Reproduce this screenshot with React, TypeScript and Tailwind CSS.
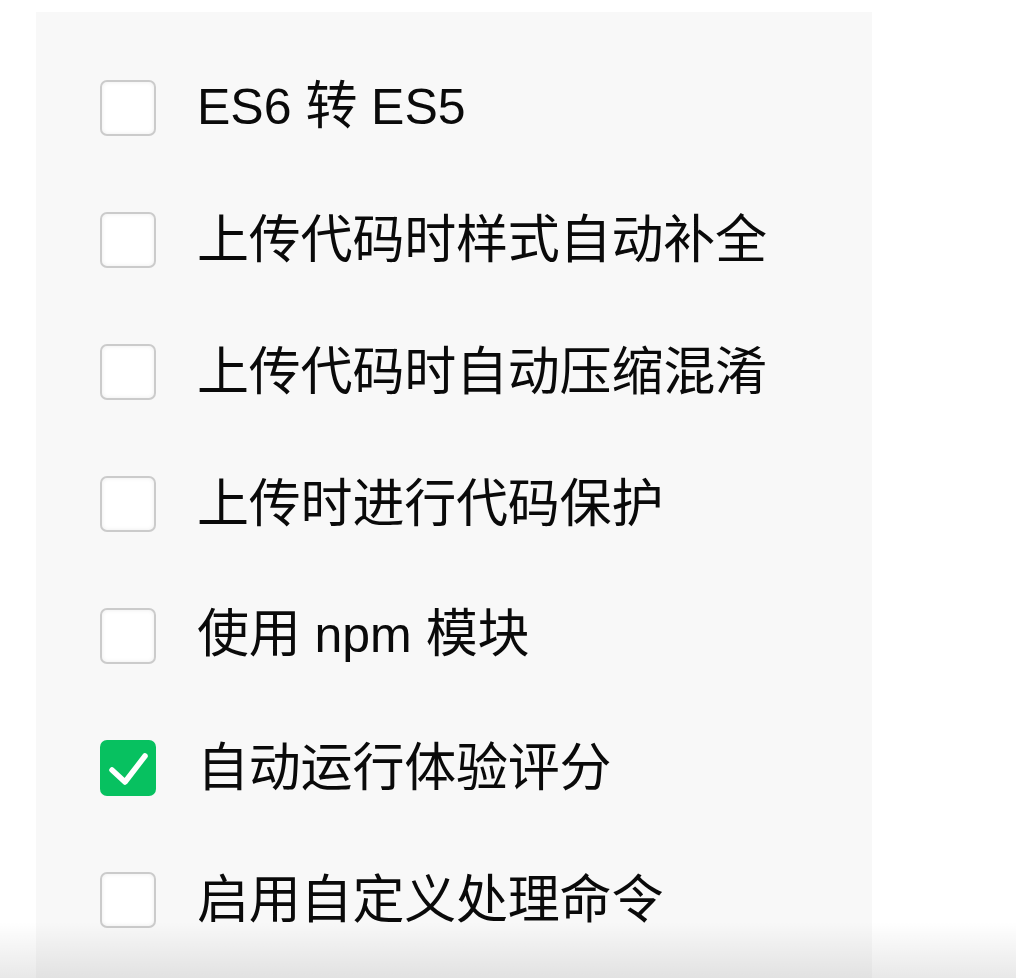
import React from 'react';

type Option = { label: string; checked?: boolean };

const options: Option[] = [
  { label: 'ES6 转 ES5' },
  { label: '上传代码时样式自动补全' },
  { label: '上传代码时自动压缩混淆' },
  { label: '上传时进行代码保护' },
  { label: '使用 npm 模块' },
  { label: '自动运行体验评分', checked: true },
  { label: '启用自定义处理命令' },
];

const CheckBox: React.FC<{ checked?: boolean }> = ({ checked }) =>
  checked ? (
    <span className="flex h-[56px] w-[56px] shrink-0 items-center justify-center rounded-[7px] bg-[#07c160]">
      <svg width="56" height="56" viewBox="0 0 56 56" fill="none">
        <path d="M12 30 L25 42 L45 16" stroke="#fff" strokeWidth="5.5" strokeLinecap="round" strokeLinejoin="round" />
      </svg>
    </span>
  ) : (
    <span className="block h-[56px] w-[56px] shrink-0 rounded-[7px] border-2 border-[#cbcbcb] bg-white shadow-[inset_0_0_4px_rgba(0,0,0,0.08)]" />
  );

// CJK runs are set a touch larger than the latin runs
const Label: React.FC<{ text: string }> = ({ text }) => (
  <span className="whitespace-pre pb-[8px] leading-none text-[#0a0a0a]">
    {text.split(/([\u4e00-\u9fff]+)/).filter(Boolean).map((part, i) =>
      /[\u4e00-\u9fff]/.test(part) ? (
        <span key={i} className="font-['Noto_Sans_CJK_SC',sans-serif] text-[52px] tracking-[-0.2px]">{part}</span>
      ) : (
        <span key={i} className="text-[50px]">{part}</span>
      )
    )}
  </span>
);

export default function App() {
  return (
    <div className="relative h-[978px] overflow-hidden bg-white font-['Liberation_Sans','Noto_Sans_CJK_SC',sans-serif]">
      <div className="ml-[36px] mt-[12px] w-[836px] bg-[#f8f8f8] pl-[64px] pt-[30px] pb-[40px]">
        {options.map((o) => (
          <label key={o.label} className="flex h-[132px] items-center gap-[41px]">
            <CheckBox checked={o.checked} />
            <Label text={o.label} />
          </label>
        ))}
      </div>
      {/* bottom fade */}
      <div className="pointer-events-none absolute inset-x-0 bottom-0 h-[56px] bg-gradient-to-b from-transparent to-[rgba(0,0,0,0.09)]" />
    </div>
  );
}
